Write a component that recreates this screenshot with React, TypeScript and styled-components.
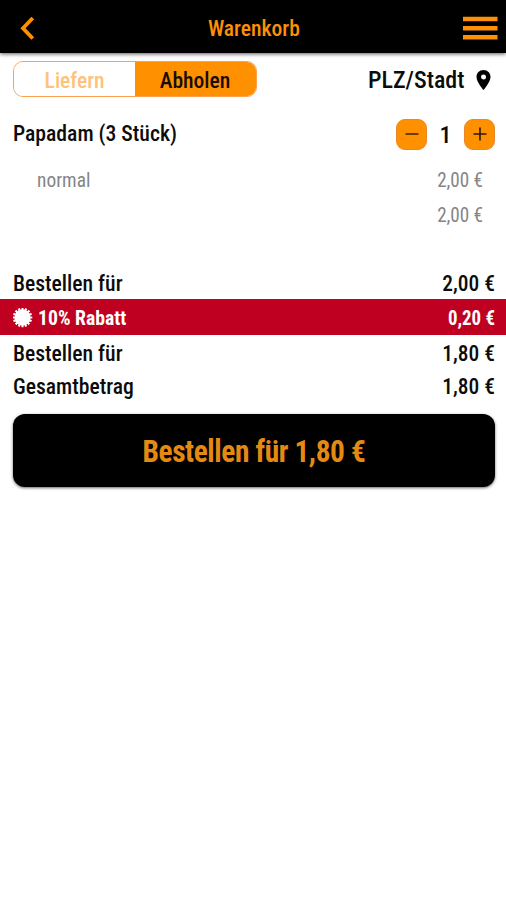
import React from "react";
import styled, { createGlobalStyle } from "styled-components";

const GlobalStyle = createGlobalStyle`
  * { box-sizing: border-box; }
  body { margin: 0; background: #fff; }
  button { font: inherit; border: 0; padding: 0; margin: 0; }
`;

const Screen = styled.main`
  width: 506px;
  min-height: 900px;
  background: #fff;
  color: #0c0c0c;
  font-family: "Roboto Condensed", Roboto, "Liberation Sans", sans-serif;
  font-stretch: 75%;
  overflow: hidden;
`;

const Header = styled.header`
  height: 53px;
  padding: 3px 8px 0 20px;
  background: #000;
  color: #fd9005;
  display: grid;
  grid-template-columns: 24px 1fr 36px;
  align-items: center;
  justify-items: center;
  box-shadow: 0 1px 4px rgba(0, 0, 0, 0.65);
`;

const Label = styled.span<{
  $size?: number;
  $weight?: number;
  $scale?: number;
  $from?: string;
  $spacing?: number;
}>`
  display: inline-block;
  font-size: ${(p) => p.$size ?? 22}px;
  font-weight: ${(p) => p.$weight ?? 500};
  letter-spacing: ${(p) => p.$spacing ?? 0}px;
  line-height: 1.2;
  white-space: nowrap;
  transform: scaleX(${(p) => p.$scale ?? 1});
  transform-origin: ${(p) => p.$from ?? "left"} center;
`;

const Title = styled.h1`
  margin: 0;
  padding: 2px 0 0 1px;
  font: inherit;
`;

const ModeBar = styled.section`
  height: 53px;
  padding: 8px 15px 8px 13px;
  display: flex;
  justify-content: space-between;
`;

const Toggle = styled.div`
  display: flex;
  width: 244px;
  height: 36px;
  border: 1px solid #ffa04f;
  border-radius: 10px;
  overflow: hidden;
`;

const Mode = styled.button<{ $active?: boolean }>`
  flex: 1;
  display: flex;
  align-items: center;
  justify-content: center;
  padding-top: 4px;
  background: ${(p) => (p.$active ? "#ff9000" : "#fff")};
  color: ${(p) => (p.$active ? "#160c00" : "#ffc27a")};
`;

const Place = styled.div`
  display: flex;
  align-items: center;
  gap: 11.5px;
  height: 38px;
`;

const ItemRow = styled.div`
  display: flex;
  align-items: center;
  justify-content: space-between;
  height: 56px;
  padding: 0 11px 0 13px;
`;

const Stepper = styled.div`
  display: grid;
  grid-template-columns: 31px 37px 31px;
  align-items: center;
  justify-items: center;
`;

const Quantity = styled.div`
  display: flex;
  height: 31px;
  padding-top: 2px;
`;

const StepButton = styled.button`
  width: 31px;
  height: 31px;
  border: 1px solid #e58a2c;
  border-radius: 9px;
  background: #ff9000;
  display: flex;
  align-items: center;
  justify-content: center;
`;

const OptionRow = styled.div`
  display: flex;
  align-items: center;
  justify-content: space-between;
  height: 35px;
  padding: 1px 23px 0 37px;
  color: #858585;
`;

const Totals = styled.section`
  padding-top: 35px;
`;

const TotalRow = styled.div<{ $discount?: boolean; $height?: number }>`
  display: flex;
  align-items: center;
  justify-content: space-between;
  height: ${(p) => p.$height ?? 34}px;
  padding: ${(p) => (p.$discount ? 1 : 3)}px 11px 0 13px;
  background: ${(p) => (p.$discount ? "#c00021" : "transparent")};
  color: ${(p) => (p.$discount ? "#fff" : "inherit")};
`;

const WithIcon = styled.div`
  display: flex;
  align-items: center;
  gap: 5px;
`;

const OrderButton = styled.button`
  display: flex;
  align-items: center;
  justify-content: center;
  width: 482px;
  height: 73px;
  margin: 12px 0 0 12.5px;
  padding-top: 4px;
  border-radius: 12px;
  background: #000;
  color: #e48a12;
  box-shadow: 0 1px 3px rgba(0, 0, 0, 0.6);
`;

export default function App() {
  return (
    <Screen>
      <GlobalStyle />
      <Header>
        <svg width="24" height="24" viewBox="0 0 24 24">
          <path d="M12.800 2 3 12.300l9.800 10.200" fill="none" stroke="currentColor" strokeWidth="3.8" />
        </svg>
        <Title>
          <Label $scale={0.98} $from="center">Warenkorb</Label>
        </Title>
        <svg width="36" height="24" viewBox="0 0 36 24">
          <path d="M1 3h34.500M1 12.300h34.500M1 21.300h34.500" stroke="currentColor" strokeWidth="4.4" />
        </svg>
      </Header>
      <ModeBar>
        <Toggle>
          <Mode><Label $scale={0.98} $from="center">Liefern</Label></Mode>
          <Mode $active><Label $scale={0.98} $from="center">Abholen</Label></Mode>
        </Toggle>
        <Place>
          <Label $size={24} $from="right">PLZ/Stadt</Label>
          <svg width="15" height="20" viewBox="0 0 15 20">
            <path fillRule="evenodd" fill="#000" d="M7.500 0C3.400 0 .5 3 .5 7c0 5 7 13 7 13s7-8 7-13c0-4-2.900-7-7-7Zm0 4.500a2.500 2.500 0 1 1 0 5 2.500 2.500 0 0 1 0-5Z" />
          </svg>
        </Place>
      </ModeBar>
      <ItemRow>
        <Label $scale={0.985}>Papadam (3 Stück)</Label>
        <Stepper>
          <StepButton aria-label="weniger">
            <svg width="14" height="14"><path d="M.5 7h13" stroke="#3c2200" strokeWidth="1.5" /></svg>
          </StepButton>
          <Quantity><Label $size={24} $from="center">1</Label></Quantity>
          <StepButton aria-label="mehr">
            <svg width="14" height="14"><path d="M.5 7h13M7 .5v13" stroke="#2b1800" strokeWidth="1.6" /></svg>
          </StepButton>
        </Stepper>
      </ItemRow>
      <OptionRow>
        <Label $size={20} $weight={400} $scale={0.97}>normal</Label>
        <Label $size={20} $weight={400} $scale={0.955} $from="right">2,00 €</Label>
      </OptionRow>
      <OptionRow>
        <span />
        <Label $size={20} $weight={400} $scale={0.955} $from="right">2,00 €</Label>
      </OptionRow>
      <Totals>
        <TotalRow $height={32}>
          <Label $scale={0.983}>Bestellen für</Label>
          <Label $scale={0.975} $from="right">2,00 €</Label>
        </TotalRow>
        <TotalRow $discount $height={36}>
          <WithIcon>
            <svg width="20" height="20" viewBox="0 0 20 20">
              <circle cx="9.5" cy="9.500" r="8.200" fill="#fff" />
              <circle
                cx="9.500"
                cy="9.500"
                r="8.600"
                fill="none"
                stroke="#fff"
                strokeWidth="2.400"
                pathLength="80"
                strokeDasharray="3 2"
                strokeDashoffset="1.500"
              />
            </svg>
            <Label $size={20} $weight={700} $scale={0.985}>10% Rabatt</Label>
          </WithIcon>
          <Label $size={20} $weight={700} $scale={0.94} $from="right">0,20 €</Label>
        </TotalRow>
        <TotalRow $height={35}>
          <Label $scale={0.983}>Bestellen für</Label>
          <Label $scale={0.975} $from="right">1,80 €</Label>
        </TotalRow>
        <TotalRow $height={32}>
          <Label $scale={0.983}>Gesamtbetrag</Label>
          <Label $scale={0.975} $from="right">1,80 €</Label>
        </TotalRow>
      </Totals>
      <OrderButton>
        <Label $size={30.5} $weight={700} $spacing={-0.4} $scale={0.962} $from="center">
          Bestellen für 1,80 €
        </Label>
      </OrderButton>
    </Screen>
  );
}
